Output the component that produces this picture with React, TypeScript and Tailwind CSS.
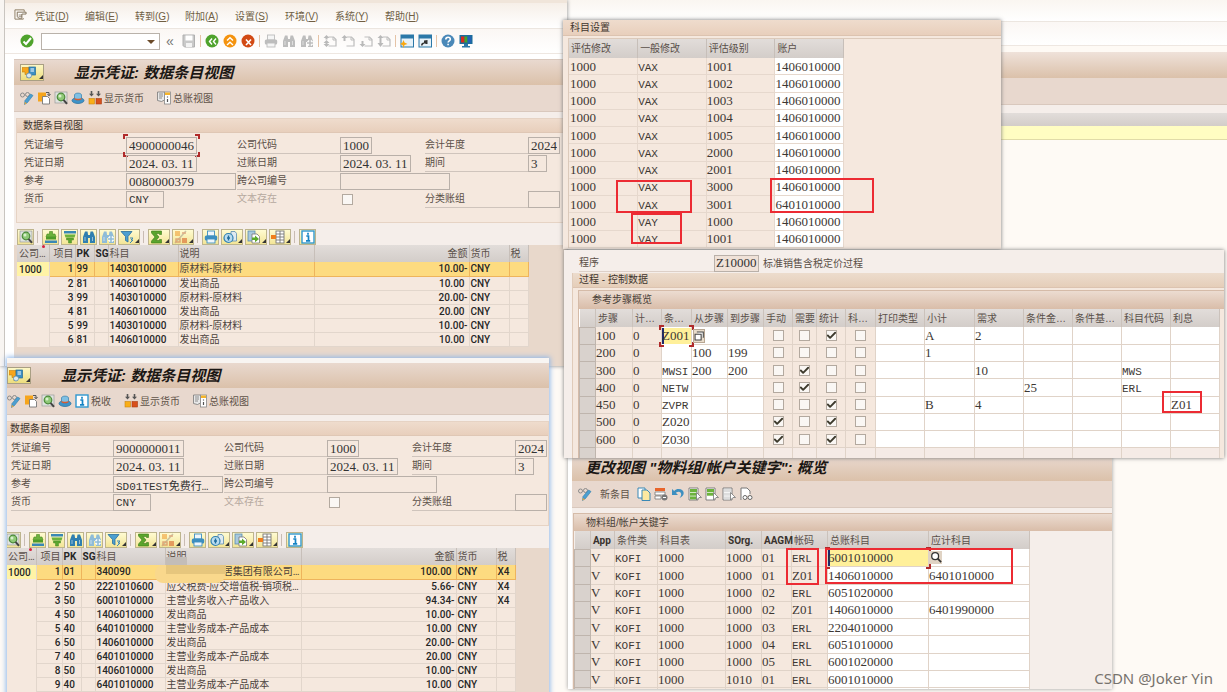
import type { ReactNode } from "react";
import { Check } from "lucide-react";

const serif = "font-['Liberation_Serif','Noto_Sans_CJK_SC',serif] text-[13px]";
const mono = "font-['Liberation_Mono','Noto_Sans_CJK_SC',monospace] text-[11px]";

const isWord = (value: string) => /^[A-Z]{2,}$|^SD/.test(value);

/* ---------- icons ---------- */

function Svg({ children, size = 14 }: { children: ReactNode; size?: number }) {
  return (
    <svg width={size} height={size} viewBox="0 0 14 14" fill="none" className="shrink-0">
      {children}
    </svg>
  );
}

const GlassesPencil = () => (
  <Svg>
    <circle cx="2.5" cy="4" r="2" stroke="#8b8b8b" />
    <circle cx="7.5" cy="3.5" r="2" stroke="#8b8b8b" />
    <path d="M13 4.500 7.500 11.500l-3 2 .5-4L10.500 3z" fill="#4c9fd0" stroke="#2f7dad" strokeWidth=".6" />
    <path d="m4.500 13.500.4-2.500L7 12.300z" fill="#e9a53a" />
  </Svg>
);

const OtherDoc = () => (
  <Svg>
    <rect x="1" y="1.5" width="8" height="9" fill="#f6a51c" />
    <path d="M5.500 5.500h5l2 2v5.500h-7z" fill="#fff" stroke="#777" strokeWidth=".9" />
    <path d="M9 1.500h3v3M10.500 3 12 4.800 13.500 3" stroke="#555" />
  </Svg>
);

const FindDoc = () => (
  <Svg>
    <rect x="1" y="1" width="12" height="11" fill="#dfe3df" stroke="#9a9a9a" strokeWidth=".7" />
    <circle cx="7" cy="6" r="3.800" fill="#8fc978" stroke="#4c8a3a" strokeWidth="1.200" />
    <path d="m9.500 8.800 3.500 4" stroke="#444" strokeWidth="2" />
    <circle cx="6" cy="5" r="1.500" fill="#d8f0cc" />
  </Svg>
);

const Hat = () => (
  <Svg>
    <ellipse cx="7" cy="9.500" rx="6" ry="3" fill="#3d93c9" stroke="#236b99" strokeWidth=".7" />
    <path d="M3.500 8V4c0-2.500 7-2.500 7 0v4c-1 1.500-6 1.500-7 0z" fill="#7fc0e4" stroke="#2f7dad" strokeWidth=".7" />
    <path d="M3.500 6.800c1 1.400 6 1.400 7 0v1.400c-1 1.400-6 1.400-7 0z" fill="#d95b2f" />
  </Svg>
);

const CurrencyBlocks = () => (
  <Svg>
    <path d="M3.500 0v3M10.500 0v3" stroke="#555" strokeWidth="1.600" />
    <path d="M1 2.800h5L3.500 5.500zM8 2.800h5l-2.500 2.700z" fill="#555" />
    <rect x="1" y="7.500" width="5.500" height="5.500" fill="#f9ae17" stroke="#c98512" strokeWidth=".6" />
    <rect x="8" y="7.500" width="5.500" height="5.500" fill="#d8501c" stroke="#a83c12" strokeWidth=".6" />
  </Svg>
);

const LedgerView = () => (
  <Svg>
    <path d="M.5 1h7v8l-3 1.500-4-1z" fill="#e8e8e8" stroke="#777" strokeWidth=".8" />
    <path d="M2 3h4M2 5h4M2 7h3" stroke="#777" strokeWidth=".8" />
    <rect x="7.500" y="1" width="6" height="12" fill="#fff" stroke="#888" strokeWidth=".8" />
    <rect x="8" y="1.500" width="5" height="2.500" fill="#f6b42a" />
    <path d="M10.500 5.500v1M10.500 8v3" stroke="#555" strokeWidth="1.200" />
  </Svg>
);

const Info = () => (
  <Svg>
    <rect x="1" y="1" width="12" height="12" fill="#fff" stroke="#2f97cf" strokeWidth="1.400" />
    <path d="M7 2.800v2M5.300 6h2.200v4.500M5 10.800h4.200" stroke="#1583c4" strokeWidth="1.700" />
  </Svg>
);

const MultiMsg = () => (
  <Svg>
    <path d="M0 1.500h7v3l2 0v4L5 12V8.500H3V6H0z" fill="#f6a51c" stroke="#c47f0e" strokeWidth=".6" />
    <rect x="7" y="1" width="6.500" height="8" fill="#3d8fc4" stroke="#226a98" strokeWidth=".7" />
    <path d="M8.500 3h3.500M8.500 5h3.500" stroke="#fff" />
    <circle cx="7" cy="9.500" r="2.500" fill="#dbe9f2" stroke="#5b8db0" strokeWidth=".8" />
  </Svg>
);

const SortUp = () => (
  <Svg>
    <path d="M5.500 1.500h3v2.500H11l1 3H2l1-3h2.500z" fill="#6cb23c" stroke="#4a8a24" strokeWidth=".6" />
    <rect x="2" y="7" width="10" height="2.500" fill="#4e9c2a" />
    <path d="M1 10.500h12V13H1z" fill="#3a88b5" />
  </Svg>
);

const SortDown = () => (
  <Svg>
    <path d="M1 1h12v2.500H1z" fill="#3a88b5" />
    <path d="M1.500 4.500h11l-1 3h-9z" fill="#6cb23c" />
    <path d="M3.500 8h7v2h-2v3h-3v-3h-2z" fill="#5ba62f" stroke="#4a8a24" strokeWidth=".5" />
  </Svg>
);

function Binoculars({ color = "#2f7fb0", plus = false }: { color?: string; plus?: boolean }) {
  return (
    <Svg>
      <path d="M3 1.500h2.500l.5 3v8.500H1V7zM8.500 1.500H11L13 7v6H8V4.500z" fill={color} />
      <path d="M5.500 5h3v3h-3z" fill={color} />
      <path d="M3 7v4M10.500 7v4" stroke="#fff" strokeOpacity=".5" />
      {plus && <path d="M10 6v6M7 9h6" stroke="#fff" strokeWidth="3.500" />}
      {plus && <path d="M10 6v6M7 9h6" stroke={color} strokeWidth="1.600" />}
    </Svg>
  );
}

const Filter = () => (
  <Svg>
    <path d="M1 1.500h11L8 6.500V12l-2.500-1.500v-4z" fill="#4c9fd0" stroke="#2a6f9c" strokeWidth=".8" />
    <path d="M10 8h3l-2 2h2l-3 3" stroke="#3a88b5" />
  </Svg>
);

const Sum = () => (
  <Svg>
    <path d="M1.500 1h10v3.500h-2V3.500H6L9 7l-3 3.500h3.500v-1h2V13h-10v-2L5 7 1.500 3z" fill="#5aa52c" stroke="#3a7a1a" strokeWidth=".6" />
  </Svg>
);

const SubTotal = () => (
  <Svg>
    <g opacity=".6">
      <rect x="1" y="1" width="5" height="5" fill="#f0a13a" />
      <rect x="8" y="8" width="5" height="5" fill="#d8662f" />
      <path d="m1 13 11-12" stroke="#a9a08c" strokeWidth="1.500" />
      <path d="M8 3h4M2 9h4v3H2z" stroke="#cf7b55" strokeWidth="1.500" />
    </g>
  </Svg>
);

function Printer({ body = "#3d8fc0", paper = "#eef6fb" }: { body?: string; paper?: string }) {
  return (
    <Svg>
      <rect x="3.500" y="1" width="7" height="5" fill={paper} stroke={body} strokeWidth=".9" />
      <rect x=".8" y="5.500" width="12.400" height="5" rx="1.500" fill={body} />
      <rect x="3" y="9" width="8" height="4" fill={paper} stroke={body} strokeWidth=".9" />
    </Svg>
  );
}

const Views = () => (
  <Svg>
    <path d="M8 1.500h4l1.500 2V11H8z" fill="#dfeaf1" stroke="#5b8db0" strokeWidth=".8" />
    <circle cx="5.500" cy="8" r="4.500" fill="#b9dcef" stroke="#2f7fb0" strokeWidth="1.200" />
    <path d="M5.500 5.500v5M4 8h3" stroke="#1f6d9e" strokeWidth="1.400" />
  </Svg>
);

const Export = () => (
  <Svg>
    <rect x="1" y="1" width="7" height="10" fill="#a9c9de" stroke="#5b8db0" strokeWidth=".8" />
    <path d="M5 4h5l2.500 2.500V13H5z" fill="#fff" stroke="#777" strokeWidth=".8" />
    <path d="M5 7.500h3V5.500L12 9l-4 3.200V10H5z" fill="#5cab2c" />
  </Svg>
);

const Layout = () => (
  <Svg>
    <rect x="5" y="1" width="8" height="12" fill="#fff" stroke="#777" strokeWidth=".9" />
    <path d="M5 4h8M5 7h8M5 10h8M9 1v12" stroke="#777" strokeWidth=".9" />
    <path d="M0 5h5v4H0z" fill="#f07d1c" />
  </Svg>
);

const Floppy = () => (
  <Svg>
    <path d="M1 1h11.500v12H2.500L1 11.500z" fill="#c9c9c9" stroke="#b0b0b0" />
    <rect x="3.500" y="1.500" width="7" height="5" fill="#fff" />
    <rect x="4" y="9" width="6" height="4" fill="#f3f3f3" />
  </Svg>
);

function RoundIcon({ fill, children }: { fill: string; children: ReactNode }) {
  return (
    <Svg>
      <circle cx="7" cy="7" r="6.500" fill={fill} />
      {children}
    </Svg>
  );
}

function PageNav({ d }: { d: string }) {
  return (
    <Svg>
      <path d="M5.500 3h5l2.500 2.500V12H5.500" stroke="#bdbdbd" strokeWidth="1.200" />
      <path d="M10 3v3h3" stroke="#bdbdbd" />
      <path d={d} fill="#b9b9b9" />
    </Svg>
  );
}

function SessionWindow({ shortcut = false }: { shortcut?: boolean }) {
  return (
    <Svg>
      <rect x="1" y="1" width="12.500" height="12" fill="#e6f1f8" stroke="#2b78a8" />
      <rect x="1" y="1" width="12.500" height="3.500" fill="#2b78a8" />
      {shortcut ? (
        <path d="M3 11.500c0-2 1-3 3-3V6.500L9.500 6v4H8l-1-.5c-1 0-2 .5-2.500 2z" fill="#333" />
      ) : (
        <path d="m3.500 6 1 2.500L7.500 10l-3 1-1 3-1-3L0 10l2.500-1.500z" fill="#f9a70f" />
      )}
    </Svg>
  );
}

const Monitor = () => (
  <Svg>
    <rect x=".5" y="1" width="13" height="9" fill="#1c6d9c" />
    <path d="M2 2.500h3.500v6H2z" fill="#d92a1c" />
    <path d="M5.500 2.500h3v6h-3z" fill="#45a52b" />
    <path d="M8.500 2.500H12v6H8.500z" fill="#2460b8" />
    <path d="M5 10h4v2h2v1.500H3V12h2z" fill="#2b78a8" />
  </Svg>
);

function SelectRows({ fill }: { fill: string[] }) {
  return (
    <Svg>
      <path d="M1 1h9v12H1z" fill="#fff" stroke="#777" strokeWidth=".9" />
      {fill.map((color, i) => (
        <rect key={i} x="2" y={2 + i * 3.7} width="7" height="3" fill={color} />
      ))}
      <path d="m8.500 5.500 5 5H11L8.500 13z" fill="#fff" stroke="#777" strokeWidth=".8" />
    </Svg>
  );
}

/* ---------- shared pieces ---------- */

function RedBox({ className }: { className: string }) {
  return <div className={`pointer-events-none absolute z-10 border-2 border-[#ec2b33] ${className}`} />;
}

function Corners() {
  const base = "pointer-events-none absolute size-[5px] border-[#b02a2a]";
  return (
    <>
      <span className={`${base} -top-[3px] -left-[3px] border-t-2 border-l-2`} />
      <span className={`${base} -top-[3px] -right-[3px] border-t-2 border-r-2`} />
      <span className={`${base} -bottom-[3px] -left-[3px] border-b-2 border-l-2`} />
      <span className={`${base} -right-[3px] -bottom-[3px] border-r-2 border-b-2`} />
    </>
  );
}

function CellText({ value }: { value: string }) {
  return isWord(value) ? <span className={`leading-[11px] ${mono}`}>{value}</span> : value;
}

function ToolButton({ label, children, text }: { label: string; children: ReactNode; text?: string }) {
  return (
    <button aria-label={label} className="flex h-5 shrink-0 items-center gap-[2px] text-[#5f5248]">
      {children}
      {text && <span>{text}</span>}
    </button>
  );
}

const Sep = () => <span className="h-3 w-px shrink-0 bg-[#e5c3a6]" />;

function CheckBox({ label, checked = false }: { label: string; checked?: boolean }) {
  return (
    <span className="relative block size-[11px]">
      <input
        type="checkbox"
        aria-label={label}
        defaultChecked={checked}
        className="block size-[11px] appearance-none border border-[#b3a99f] bg-[#faf7f4]"
      />
      {checked && <Check className="pointer-events-none absolute inset-0 size-[11px] text-[#3d3a2c]" strokeWidth={4} />}
    </span>
  );
}

/* ---------- document display ---------- */

type Field = { label: string; value?: string; width?: string; focus?: boolean; kind?: "check" | "none" };

function FormField({ id, field }: { id: string; field: Field }) {
  if (field.kind === "none") return <span className="col-span-2" />;
  if (field.kind === "check") {
    return (
      <>
        <span className="h-[17px] text-[#b5a99f]">{field.label}</span>
        <span className="flex items-center pl-[2px]">
          <CheckBox label={field.label} />
        </span>
      </>
    );
  }
  return (
    <>
      <label htmlFor={id} className="h-[17px] overflow-hidden border-b border-[#cfc4bc] whitespace-nowrap">
        {field.label}
      </label>
      <span className={`relative h-[17px] ${field.width}`}>
        <input
          id={id}
          defaultValue={field.value}
          className={`block h-[17px] w-full border border-[#b9b0a9] bg-transparent px-[2px] text-[#333] outline-none ${isWord(field.value ?? "") ? mono : serif}`}
        />
        {field.focus && <Corners />}
      </span>
    </>
  );
}

const gridButtons: { label: string; icon: ReactNode; menu?: boolean; sep?: boolean }[] = [
  { label: "明细", icon: <FindDoc />, sep: true },
  { label: "升序", icon: <SortUp /> },
  { label: "降序", icon: <SortDown /> },
  { label: "查找", icon: <Binoculars /> },
  { label: "查找下一个", icon: <Binoculars color="#8fbcd8" plus /> },
  { label: "过滤", icon: <Filter />, menu: true, sep: true },
  { label: "合计", icon: <Sum />, menu: true },
  { label: "小计", icon: <SubTotal />, menu: true, sep: true },
  { label: "打印", icon: <Printer /> },
  { label: "视图", icon: <Views />, menu: true },
  { label: "导出", icon: <Export />, menu: true },
  { label: "布局", icon: <Layout />, menu: true, sep: true },
  { label: "信息", icon: <Info /> },
];

type Line = [string, string, string, string, string, string];

const lineColumns = [
  "w-[32px]", "w-[26px]", "w-[19px]", "w-[14px]", "w-[70px]", "w-[136px]", "w-[155px]", "w-[40px]", "w-[19px]",
];
const lineHeads = ["公司…", "项目", "PK", "SG", "科目", "说明", "金额", "货币", "税"];

function LineTable({ lines, firstPad }: { lines: Line[]; firstPad: string }) {
  return (
    <table className="w-[511px] table-fixed border-collapse bg-[#f5e8de] font-['Roboto','Noto_Sans_CJK_SC',sans-serif] text-[10px] leading-[13px] whitespace-nowrap text-[#262626]">
      <colgroup>
        {lineColumns.map((width, i) => (
          <col key={i} className={width} />
        ))}
      </colgroup>
      <thead>
        <tr className="h-[17px] bg-linear-to-b from-[#e2ddda] to-[#d3cdc9]">
          {lineHeads.map((head, i) => (
            <th
              key={head}
              className={`relative border-r border-[#c7bfb9] p-0 ${i === 0 ? firstPad : "px-px"} ${i === 1 || i === 6 ? "text-right" : "text-left"} ${i === 2 || i === 3 ? "font-bold" : "font-normal text-[#5a504a]"}`}
            >
              {head}
              {i === 0 && <span className="absolute top-0 right-[4px] size-[3px] rounded-full bg-[#d8203c]" />}
            </th>
          ))}
        </tr>
      </thead>
      <tbody>
        {lines.map(([item, key, account, text, amount, tax], i) => {
          const cell = `border-r border-b p-0 px-px ${i === 0 ? "border-[#eeb45c] bg-[#fddb80]" : "border-[#e2d6cc]"}`;
          return (
            <tr key={item} className="h-[14px] font-medium">
              <td className={`border-r border-[#e2d6cc] p-0 ${firstPad} ${i === 0 ? "bg-[#fff3a6]" : ""}`}>
                {i === 0 && "1000"}
              </td>
              <td className={`${cell} text-right`}>{item}</td>
              <td className={cell}>{key}</td>
              <td className={cell} />
              <td className={cell}>{account}</td>
              <td className={`${cell} font-normal text-[#4b423c] ${text.startsWith("居") ? "text-right" : ""}`}>{text}</td>
              <td className={`${cell} text-right`}>
                <span className={amount.endsWith("-") ? "" : "pr-[3px]"}>{amount}</span>
              </td>
              <td className={cell}>CNY</td>
              <td className={cell}>{tax}</td>
            </tr>
          );
        })}
      </tbody>
    </table>
  );
}

function DocumentScreen({ name, fields, lines, tax = false }: { name: string; fields: Field[]; lines: Line[]; tax?: boolean }) {
  return (
    <div className="flex-1 bg-[#f5eeea]">
      <header className="flex h-[25px] items-center bg-linear-to-b from-[#e9d9cf] to-[#dbc1aa] pl-[6px]">
        <button
          aria-label="服务"
          className="flex h-[17px] w-[24px] items-center border border-[#a99f83] bg-linear-to-b from-[#fdf7c4] to-[#eddd7c] pl-px"
        >
          <MultiMsg />
          <span className="mt-[8px] ml-[3px] border-b-4 border-l-4 border-b-[#333] border-l-transparent" />
        </button>
        <h1 className="ml-[30px] text-[15px] leading-6 font-bold whitespace-pre text-[#1b1714] italic">显示凭证: 数据条目视图</h1>
      </header>
      <div className="flex h-[27px] items-center gap-[3px] border-b border-[#d9c8bd] bg-[#e8d8ce] pl-[6px]">
        <ToolButton label="显示/更改"><GlassesPencil /></ToolButton>
        <ToolButton label="其他凭证"><OtherDoc /></ToolButton>
        <ToolButton label="选择单项"><FindDoc /></ToolButton>
        <ToolButton label="抬头"><Hat /></ToolButton>
        {tax && (
          <span className="mr-[10px]">
            <ToolButton label="税收" text="税收"><Info /></ToolButton>
          </span>
        )}
        <ToolButton label="显示货币" text="显示货币"><CurrencyBlocks /></ToolButton>
        <span className="ml-[10px]">
          <ToolButton label="总账视图" text="总账视图"><LedgerView /></ToolButton>
        </span>
      </div>
      <section className="mt-[6px] ml-[2px] h-[105px] border border-[#e6d3c4] bg-[#f5e8de]">
        <h2 className="h-[14px] border-b border-[#dfc7b5] bg-linear-to-b from-[#efdccd] to-[#e8cfbc] pl-[6px] leading-[13px] text-[#3f352e]">
          数据条目视图
        </h2>
        <div className="mt-[4px] ml-[7px] grid grid-cols-[102px_111px_103px_85px_103px_1fr] gap-y-px leading-[16px] text-[#5a4f47]">
          {fields.map((field, i) => (
            <FormField key={i} id={`${name}-${i}`} field={field} />
          ))}
        </div>
      </section>
      <div className="mt-[5px] ml-[2px] flex h-[17px] items-center gap-[2px] pl-px">
        {gridButtons.map(({ label, icon, menu, sep }) => (
          <div key={label} className="flex shrink-0 items-center">
            <button
              aria-label={label}
              className={`flex h-[16px] items-center justify-center border border-[#bdb48d] bg-linear-to-b from-[#fffbd2] to-[#f3e596] ${menu ? "w-[22px]" : "w-[17px]"}`}
            >
              {icon}
              {menu && <span className="mt-[8px] ml-px border-b-4 border-l-4 border-b-[#333] border-l-transparent" />}
            </button>
            {sep && <span className="mr-[2px] ml-[3px] h-[12px] w-px bg-[#c9bcb3]" />}
          </div>
        ))}
      </div>
      <div className="min-h-[130px] bg-[#e8d8cb] pl-[3px]">
        <LineTable lines={lines} firstPad={tax ? "pl-[4px]" : "pl-[2px]"} />
      </div>
    </div>
  );
}

const row = (label: string, value: string, width: string, focus = false): Field => ({ label, value, width, focus });

const docFields = (no: string, ref: string, focus: boolean): Field[] => [
  row("凭证编号", no, "w-[71px]", focus),
  row("公司代码", "1000", "w-[32px]"),
  row("会计年度", "2024", "w-[32px]"),
  row("凭证日期", "2024. 03. 11", "w-[71px]"),
  row("过账日期", "2024. 03. 11", "w-[71px]"),
  row("期间", "3", "w-[19px]"),
  row("参考", ref, "w-[110px]"),
  row("跨公司编号", "", "w-[110px]"),
  { label: "", kind: "none" },
  row("货币", "CNY", "w-[38px]"),
  { label: "文本存在", kind: "check" },
  row("分类账组", "", "w-[32px]"),
];

const stockLines: Line[] = [
  ["1", "99", "1403010000", "原材料-原材料", "10.00-", ""],
  ["2", "81", "1406010000", "发出商品", "10.00", ""],
  ["3", "99", "1403010000", "原材料-原材料", "20.00-", ""],
  ["4", "81", "1406010000", "发出商品", "20.00", ""],
  ["5", "99", "1403010000", "原材料-原材料", "10.00-", ""],
  ["6", "81", "1406010000", "发出商品", "10.00", ""],
];

const salesLines: Line[] = [
  ["1", "01", "340090", "居集团有限公司…", "100.00", "X4"],
  ["2", "50", "2221010600", "应交税费-应交增值税-销项税…", "5.66-", "X4"],
  ["3", "50", "6001010000", "主营业务收入-产品收入", "94.34-", "X4"],
  ["4", "50", "1406010000", "发出商品", "10.00-", ""],
  ["5", "40", "6401010000", "主营业务成本-产品成本", "10.00", ""],
  ["6", "50", "1406010000", "发出商品", "20.00-", ""],
  ["7", "40", "6401010000", "主营业务成本-产品成本", "20.00", ""],
  ["8", "50", "1406010000", "发出商品", "10.00-", ""],
  ["9", "40", "6401010000", "主营业务成本-产品成本", "10.00", ""],
];

const menus = [
  ["凭证", "D"], ["编辑", "E"], ["转到", "G"], ["附加", "A"], ["设置", "S"], ["环境", "V"], ["系统", "Y"], ["帮助", "H"],
];

function MenuBar() {
  return (
    <nav className="flex h-[26px] items-center border-b border-[#ece6e0] bg-linear-to-b from-[#f6efe8] to-white pt-[2px] pl-[9px] text-[#6f5f45]">
      <span className="mr-[8px] mb-[4px] flex">
        <Svg size={13}>
          <path d="M11 4V2H1v10h9v-1" stroke="#8a7a60" />
          <path d="M3.500 4.500H13v2H8.500v4.500H5L3.500 9z" fill="#fff" stroke="#6f5f45" strokeWidth=".9" />
          <path d="M5 7.500h3.500M5 9h3.500" stroke="#6f5f45" strokeWidth=".7" />
        </Svg>
      </span>
      {menus.map(([text, key]) => (
        <button key={key} className="w-[50px] text-left whitespace-nowrap last:w-auto">
          {text}(<u>{key}</u>)
        </button>
      ))}
    </nav>
  );
}

function CommandBar() {
  return (
    <div className="flex h-[25px] items-center gap-[4px] border-b border-[#eee7e1] bg-linear-to-b from-[#fbf7f4] to-white pl-[15px]">
      <ToolButton label="回车">
        <RoundIcon fill="#4fa32d"><path d="m3.500 7.500 2.500 2.500 5-6" stroke="#fff" strokeWidth="2" /></RoundIcon>
      </ToolButton>
      <div className="relative mr-[2px] ml-[3px] flex">
        <input aria-label="命令" className="h-[17px] w-[119px] border border-[#b9b2aa] bg-white outline-none" />
        <span className="absolute top-[7px] right-[5px] border-x-4 border-t-4 border-x-transparent border-t-[#6b4b2a]" />
      </div>
      <span className="mr-[4px] text-sm leading-3 text-[#777]">«</span>
      <ToolButton label="保存"><Floppy /></ToolButton>
      <Sep />
      <ToolButton label="返回">
        <RoundIcon fill="#4fa32d"><path d="m7 4.500-2.500 3 2.500 3m4-6-2.500 3 2.500 3" stroke="#fff" strokeWidth="1.400" /></RoundIcon>
      </ToolButton>
      <ToolButton label="退出">
        <RoundIcon fill="#f4930f"><path d="m4 6.500 3-2.800 3 2.800m-6 4.500 3-2.800 3 2.800" stroke="#fff" strokeWidth="1.400" /></RoundIcon>
      </ToolButton>
      <ToolButton label="取消">
        <RoundIcon fill="#d24a14"><path d="m5 5.500 5 5.500m0-5.500-5 5.500" stroke="#fff" strokeWidth="1.600" /></RoundIcon>
      </ToolButton>
      <Sep />
      <ToolButton label="打印"><Printer body="#bdbdbd" paper="#f5f5f5" /></ToolButton>
      <ToolButton label="查找"><Binoculars color="#bdbdbd" /></ToolButton>
      <ToolButton label="继续查找"><Binoculars color="#bdbdbd" plus /></ToolButton>
      <Sep />
      <ToolButton label="第一页"><PageNav d="m3.500 1 3 3h-2v1.500h-2V4h-2zM3.500 6l3 3h-2v1h2l-3 3-3-3h2V9h-2z" /></ToolButton>
      <ToolButton label="上一页"><PageNav d="m3.500 1 3 3h-2v3h-2V4h-2z" /></ToolButton>
      <ToolButton label="下一页"><PageNav d="m3.500 13 3-3h-2V7h-2v3h-2z" /></ToolButton>
      <ToolButton label="最后一页"><PageNav d="m3.500 1 3 3h-2v5h2l-3 4-3-4h2V4h-2z" /></ToolButton>
      <Sep />
      <ToolButton label="新会话"><SessionWindow /></ToolButton>
      <ToolButton label="快捷方式"><SessionWindow shortcut /></ToolButton>
      <Sep />
      <ToolButton label="帮助信息">
        <RoundIcon fill="#4a88b8">
          <path d="M4.800 5.500c0-3 4.500-3 4.500-.3 0 1.600-2.200 1.600-2.200 3.300M7.100 9.800v1.500" stroke="#fff" strokeWidth="1.600" />
        </RoundIcon>
      </ToolButton>
      <ToolButton label="定制本地布局"><Monitor /></ToolButton>
    </div>
  );
}

/* ---------- account settings ---------- */

const accountRows = [
  ["VAX", "1001"], ["VAX", "1002"], ["VAX", "1003"], ["VAX", "1004"], ["VAX", "1005"], ["VAX", "2000"],
  ["VAX", "2001"], ["VAX", "3000"], ["VAX", "3001"], ["VAY", "1000"], ["VAY", "1001"],
];

function AccountSettings() {
  return (
    <section className="absolute top-[20px] left-[563px] z-20 h-[229px] w-[438px] overflow-hidden bg-[#f5e8de] shadow-[0_0_4px_#777]">
      <h2 className="h-[16px] border-b border-[#dcc3b0] bg-linear-to-b from-[#efdccd] to-[#e8cfbc] pl-[7px] leading-[16px] text-[#3f352e]">
        科目设置
      </h2>
      <div className="mt-[2px] ml-[5px] border-t border-l border-[#dccabb]">
        <table className="h-[209px] w-[275px] table-fixed border-collapse leading-[15px] text-[#3d3733]">
          <thead>
            <tr className="h-[19px] bg-linear-to-b from-[#e2ddda] to-[#d3cdc9] text-left text-[#5a504a]">
              {["评估修改", "一般修改", "评估级别", "账户"].map((head) => (
                <th key={head} className="border-r border-[#c7bfb9] p-0 px-[2px] font-normal">{head}</th>
              ))}
            </tr>
          </thead>
          <tbody>
            {accountRows.map(([mod, level], i) => (
              <tr key={i} className={serif}>
                <td className="border-r border-b border-[#e6d8cd] p-0 pl-px">1000</td>
                <td className="border-r border-b border-[#e6d8cd] p-0"><CellText value={mod} /></td>
                <td className="border-r border-b border-[#e6d8cd] p-0">{level}</td>
                <td className="border-r border-b border-[#e6d8cd] bg-white p-0">{i === 8 ? "6401010000" : "1406010000"}</td>
              </tr>
            ))}
          </tbody>
        </table>
      </div>
      <RedBox className="top-[160px] left-[53px] h-[33px] w-[76px]" />
      <RedBox className="top-[158px] left-[207px] h-[35px] w-[104px]" />
      <RedBox className="top-[193px] left-[68px] h-[31px] w-[51px]" />
    </section>
  );
}

/* ---------- pricing procedure ---------- */

const stepColumns = [
  "w-[16px]", "w-[37px]", "w-[29px]", "w-[30px]", "w-[36px]", "w-[36px]", "w-[29px]", "w-[24px]", "w-[29px]",
  "w-[30px]", "w-[49px]", "w-[50px]", "w-[49px]", "w-[49px]", "w-[49px]", "w-[49px]", "w-[49px]",
];
const stepHeads = [
  "", "步骤", "计…", "条…", "从步骤", "到步骤", "手动", "需要", "统计", "科…", "打印类型", "小计", "需求", "条件金…", "条件基…", "科目代码", "利息",
];

// step, counter, type, from, to, flags, print, subtotal, requirement, formula, base, key, accrual
const steps = [
  ["100", "0", "Z001", "", "", "..x.", "", "A", "2", "", "", "", ""],
  ["200", "0", "", "100", "199", "....", "", "1", "", "", "", "", ""],
  ["300", "0", "MWSI", "200", "200", ".x..", "", "", "10", "", "", "MWS", ""],
  ["400", "0", "NETW", "", "", ".x..", "", "", "", "25", "", "ERL", ""],
  ["450", "0", "ZVPR", "", "", "..x.", "", "B", "4", "", "", "", "Z01"],
  ["500", "0", "Z020", "", "", "x.x.", "", "", "", "", "", "", ""],
  ["600", "0", "Z030", "", "", "x.x.", "", "", "", "", "", "", ""],
];

function PricingProcedure() {
  return (
    <section className="absolute top-[250px] left-[564px] z-20 h-[208px] w-[660px] overflow-hidden bg-[#f5eeea] shadow-[0_0_4px_#777]">
      <div className="flex h-[23px] items-center pt-[3px] pl-[15px] text-[#5a4f47]">
        <label htmlFor="procedure" className="h-[17px] w-[135px] border-b border-[#ddd0c8] leading-[16px]">程序</label>
        <input
          id="procedure"
          defaultValue="Z10000"
          className={`h-[17px] w-[45px] border border-[#b9b0a9] bg-[#f0e2d8] px-px text-[#333] outline-none ${serif}`}
        />
        <span className="ml-[4px]">标准销售含税定价过程</span>
      </div>
      <div className="ml-[8px] border-l border-[#e0cbb9] bg-[#f5e8de]">
        <h2 className="h-[15px] border-b border-[#dcc3b0] bg-linear-to-b from-[#ecdccd] to-[#e5ceb9] pl-[6px] leading-[14px] text-[#3f352e]">
          过程 - 控制数据
        </h2>
        <div className="mt-[2px] ml-[5px] border-l border-[#d5bba8]">
          <h3 className="h-[19px] border-t border-[#d5bba8] bg-linear-to-b from-[#ecdcd1] to-[#d9bda9] pl-[13px] leading-[18px] text-[#4a3f37]">
            参考步骤概览
          </h3>
          <table className="h-[156px] w-[640px] table-fixed border-collapse bg-white leading-[15px] whitespace-nowrap text-[#3d3733]">
            <colgroup>
              {stepColumns.map((width, i) => (
                <col key={i} className={width} />
              ))}
            </colgroup>
            <thead>
              <tr className="h-[18px] bg-linear-to-b from-[#e2ddda] to-[#d3cdc9] text-left text-[#5a504a]">
                {stepHeads.map((head, i) => (
                  <th key={i} className="border-r border-[#cbc2bb] p-0 pl-[2px] font-normal">{head}</th>
                ))}
              </tr>
            </thead>
            <tbody>
              {steps.map((step) => (
                <tr key={step[0]}>
                  <td className="border border-[#bfb5ad] bg-[#d9d2cd] p-0" />
                  {step.map((value, i) =>
                    i === 5 ? (
                      value.split("").map((flag, k) => (
                        <td key={`flag${k}`} className="border-r border-b border-[#e0d3c8] bg-[#f5e8de] p-0">
                          <span className="flex justify-center">
                            <CheckBox label={`${step[0]} ${stepHeads[6 + k]}`} checked={flag === "x"} />
                          </span>
                        </td>
                      ))
                    ) : value === "Z001" ? (
                      <td key={i} className="border-r border-[#e0d3c8] p-0">
                        <div className="relative">
                          <input
                            aria-label="条件类型"
                            defaultValue="Z001"
                            className={`block h-[16px] w-full bg-[#fff09a] shadow-[inset_2px_0_#1d2a6b] outline-none ${serif}`}
                          />
                          <Corners />
                          <button
                            aria-label="选择"
                            className="absolute top-px left-[31px] flex h-[14px] w-[12px] items-center justify-center border border-[#b8a794] bg-[#e9dccb]"
                          >
                            <Svg size={10}>
                              <path d="M4 1.500h9v8M1.500 4.500h8.500v8H1.500z" stroke="#444" strokeWidth="1.500" fill="#fff" />
                            </Svg>
                          </button>
                        </div>
                      </td>
                    ) : (
                      <td key={i} className={`border-r border-b border-[#e0d3c8] p-0 ${serif} ${i < 2 ? "bg-[#f5e8de]" : ""}`}>
                        <CellText value={value} />
                      </td>
                    ),
                  )}
                </tr>
              ))}
              <tr className="bg-[#f5ebe6]">
                <td className="border border-[#bfb5ad] bg-[#d9d2cd] p-0" />
                {stepColumns.slice(1).map((_, i) => (
                  <td key={i} className="border-r border-[#e0d3c8] p-0">&nbsp;</td>
                ))}
              </tr>
            </tbody>
          </table>
        </div>
      </div>
      <RedBox className="top-[141px] left-[598px] h-[22px] w-[40px]" />
    </section>
  );
}

/* ---------- material group / account key ---------- */

const keyColumns = [
  "w-[16px]", "w-[24px]", "w-[43px]", "w-[68px]", "w-[36px]", "w-[30px]", "w-[36px]", "w-[101px]", "w-[101px]",
];
const keyHeads = ["", "App", "条件类", "科目表", "SOrg.", "AAGM", "帐码", "总账科目", "应计科目"];
const keyRows = [
  ["1000", "01", "ERL", "6001010000", ""],
  ["1000", "01", "Z01", "1406010000", "6401010000"],
  ["1000", "02", "ERL", "6051020000", ""],
  ["1000", "02", "Z01", "1406010000", "6401990000"],
  ["1000", "03", "ERL", "2204010000", ""],
  ["1000", "04", "ERL", "6051010000", ""],
  ["1000", "05", "ERL", "6001020000", ""],
  ["1010", "01", "ERL", "6001010000", ""],
];

function AccountKeys() {
  const green = "#6cb23c";
  return (
    <section className="absolute top-[456px] left-[568px] z-10 h-[233px] w-[544px] overflow-hidden border-l-4 border-white bg-[#f5eeea] shadow-[0_0_4px_#999]">
      <h1 className="h-[25px] bg-linear-to-b from-[#e9d9cf] to-[#dbc1aa] pl-[13px] text-[15px] leading-6 font-bold whitespace-pre text-[#1b1714] italic">
        更改视图 "物料组/帐户关键字": 概览
      </h1>
      <div className="flex h-[27px] items-center gap-[3px] border-b border-[#d9c8bd] bg-[#e8d8ce] pl-[6px]">
        <ToolButton label="显示/更改"><GlassesPencil /></ToolButton>
        <button className="mr-[4px] ml-[5px] text-[#5f5248]">新条目</button>
        <ToolButton label="复制为">
          <Svg>
            <path d="M1 1h7v10H1z" fill="#fff" stroke="#3a88b5" />
            <path d="M5 3h5l3 3v7.500H5z" fill="#fde9a0" stroke="#3a88b5" />
          </Svg>
        </ToolButton>
        <ToolButton label="删除">
          <Svg>
            <path d="M1 1h10v3H1z" fill="#e8642a" />
            <path d="M1 5h10v3H1zM1 9h6v3H1z" fill="#fff" stroke="#777" strokeWidth=".8" />
            <circle cx="10.500" cy="10.500" r="3" fill="#777" />
            <path d="M9 10.500h3" stroke="#fff" />
          </Svg>
        </ToolButton>
        <ToolButton label="撤销">
          <Svg>
            <path d="M1 2v6h6L4.800 5.800C8 3.500 11 5 10 8.500c-.3 1-.8 1.500-1.500 2.500 6-2 5.500-9-1-9-1.700 0-3 .6-4.300 2z" fill="#3d8fc0" />
          </Svg>
        </ToolButton>
        <ToolButton label="全选"><SelectRows fill={[green, green, green]} /></ToolButton>
        <ToolButton label="选择块"><SelectRows fill={[green, green]} /></ToolButton>
        <ToolButton label="取消全选"><SelectRows fill={["#ddd", "#ddd", "#ddd"]} /></ToolButton>
        <ToolButton label="打印格式">
          <Svg>
            <path d="M2 13V1h6l3 3v3" fill="#fff" stroke="#777" />
            <circle cx="6" cy="10.500" r="2" fill="#fff" stroke="#666" />
            <circle cx="11" cy="10.500" r="2" fill="#fff" stroke="#666" />
          </Svg>
        </ToolButton>
      </div>
      <div className="mt-[5px] ml-px border-l border-[#d5bba8]">
        <h2 className="h-[18px] border-t border-[#d5bba8] bg-linear-to-b from-[#ecdcd1] to-[#d9bda9] pl-[12px] leading-[17px] text-[#4a3f37]">
          物料组/帐户关键字
        </h2>
        <table className="h-[174px] w-[455px] table-fixed border-collapse leading-[15px] whitespace-nowrap text-[#3d3733]">
          <colgroup>
            {keyColumns.map((width, i) => (
              <col key={i} className={width} />
            ))}
          </colgroup>
          <thead>
            <tr className="h-[18px] bg-linear-to-b from-[#e2ddda] to-[#d3cdc9] text-left text-[#5a504a]">
              {keyHeads.map((head) => (
                <th
                  key={head}
                  className={`border-r border-[#cbc2bb] p-0 pl-[2px] ${/^[A-Z]/.test(head) ? "font-['Roboto',sans-serif] font-bold text-[#3a332e]" : "font-normal"}`}
                >
                  {head}
                </th>
              ))}
            </tr>
          </thead>
          <tbody>
            {keyRows.map((values, r) => (
              <tr key={r}>
                <td className="border border-[#bfb5ad] bg-[#d9d2cd] p-0" />
                {["V", "KOFI", "1000", ...values].map((value, i) => (
                  <td key={i} className={`border-r border-b border-[#e0d3c8] p-0 ${i < 6 ? "bg-[#f5e8de]" : "bg-white"} ${serif}`}>
                    {r === 0 && i === 6 ? (
                      <div className="relative">
                        <input
                          aria-label="总账科目"
                          defaultValue={value}
                          className={`block h-[16px] w-full bg-[#fff09a] shadow-[inset_2px_0_#1d2a6b] outline-none ${serif}`}
                        />
                        <Corners />
                        <button aria-label="搜索" className="absolute top-px left-[101px] flex size-[13px] items-center justify-center bg-[#e0d3c4]">
                          <Svg size={12}>
                            <circle cx="6" cy="6" r="4" fill="#fff" stroke="#333" strokeWidth="1.500" />
                            <path d="m9 9 4 4" stroke="#333" strokeWidth="2" />
                          </Svg>
                        </button>
                      </div>
                    ) : (
                      <CellText value={value} />
                    )}
                  </td>
                ))}
              </tr>
            ))}
            <tr>
              <td className="border border-[#bfb5ad] bg-[#d9d2cd] p-0" />
              {keyColumns.slice(1).map((_, i) => (
                <td key={i} className={`border-r border-[#e0d3c8] p-0 ${i < 6 ? "bg-[#f5e8de]" : "bg-white"}`}>&nbsp;</td>
              ))}
            </tr>
          </tbody>
        </table>
      </div>
      <RedBox className="top-[92px] left-[214px] h-[37px] w-[33px]" />
      <RedBox className="top-[92px] left-[253px] h-[36px] w-[188px]" />
    </section>
  );
}

export default function App() {
  return (
    <main className="relative min-h-screen overflow-hidden bg-[#fefaf5] font-['Liberation_Sans','Noto_Sans_CJK_SC',sans-serif] text-[10px]">
      {/* Session window behind everything */}
      <div>
        <div className="h-[22px] border-b border-[#ece6e0] bg-linear-to-b from-[#faf6f1] to-white" />
        <div className="h-[24px] border-b border-[#eee7e1] bg-linear-to-b from-[#fbf7f4] to-white" />
        <div className="mt-[6px] h-[26px] bg-linear-to-b from-[#efe2da] to-[#dbc1aa]" />
        <div className="h-[27px] border-b border-[#d9c8bd] bg-[#e8d8ce]" />
        <div className="h-[8px] bg-[#f5eeea]" />
        <div className="h-[13px] bg-linear-to-b from-[#e2ddda] to-[#d3cdc9]" />
        <div className="h-[14px] border-b border-[#e0dba8] bg-[#fffdc2]" />
      </div>

      {/* Goods movement document */}
      <div className="absolute top-0 left-0 h-[366px] w-[567px] overflow-hidden bg-[#f8f5f2] shadow-[0_0_4px_#888]">
        <div className="ml-[4px] border-l border-[#c9c5c0] bg-white">
          <div className="h-[3px] bg-[#f0e5da]" />
          <MenuBar />
          <CommandBar />
          <div className="mt-[5px] ml-[9px] border-t border-[#d9c8bd]">
            <DocumentScreen name="stock" fields={docFields("4900000046", "0080000379", true)} lines={stockLines} />
          </div>
        </div>
      </div>

      {/* Billing document */}
      <div className="absolute top-[358px] left-[7px] h-[340px] w-[542px] overflow-hidden bg-[#f8f5f2] pt-[5px] shadow-[0_0_5px_1px_#8db6ea]">
        <div className="-ml-[6px]">
          <DocumentScreen name="billing" fields={docFields("9000000011", "SD01TEST免费行…", false)} lines={salesLines} tax />
        </div>
        <div className="absolute top-[207px] left-[148px] h-[18px] w-[70px] rounded-lg bg-[#f9d88c]" />
        <div className="absolute top-[199px] left-[159px] h-[8px] w-[21px] bg-[#c3bdb8]" />
        <div className="absolute top-[207px] left-[159px] h-[9px] w-[60px] bg-[#e6c67d]" />
      </div>

      <AccountSettings />
      <PricingProcedure />
      <AccountKeys />

      <p className="absolute right-[14px] bottom-[4px] z-30 font-['Noto_Sans',sans-serif] text-[15px] leading-5 text-[#77726d]">
        CSDN @Joker Yin
      </p>
    </main>
  );
}
